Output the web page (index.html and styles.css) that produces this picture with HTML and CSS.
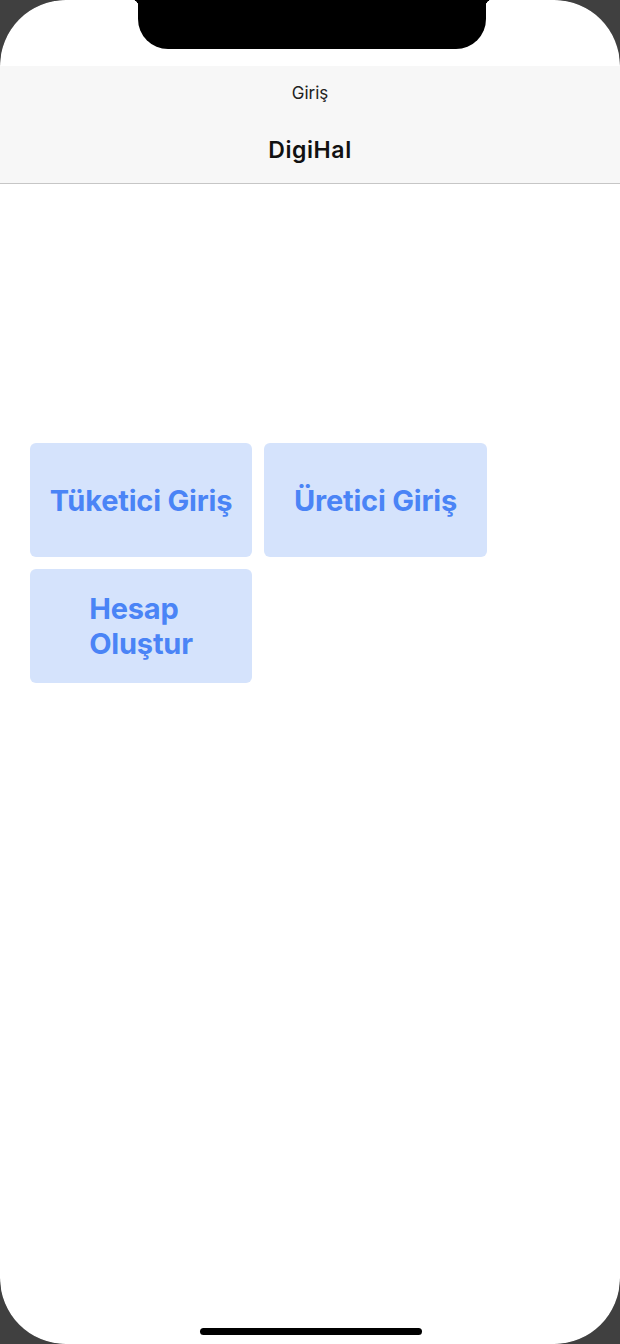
FILE: index.html
```html
<!DOCTYPE html>
<html lang="tr">
<head>
    <meta charset="UTF-8">
    <meta name="viewport" content="width=device-width, initial-scale=1.0">
    <title>DigiHal</title>
    <link rel="stylesheet" href="styles.css">
</head>
<body>

<div class="frame">
    <div class="screen">
        <div class="notch"></div>

        <div class="status"></div>

        <header class="nav">
            <div class="nav-back">Giriş</div>
            <h1 class="nav-title">DigiHal</h1>
        </header>

        <main class="content">
            <div class="menu">
                <button class="menu-btn">Tüketici Giriş</button>
                <button class="menu-btn">Üretici Giriş</button>
                <button class="menu-btn"><span class="wrap">Hesap<br>Oluştur</span></button>
            </div>
        </main>

        <div class="home-bar"></div>
    </div>
</div>

</body>
</html>
```

FILE: styles.css
```css
body {
    margin: 0;
    padding: 0;
    background-color: #404040;
    font-family: Inter, 'Noto Sans', sans-serif;
}

.frame {
    width: 620px;
    height: 1344px;
    background-color: #000;
    border-radius: 66px;
    overflow: hidden;
}

.screen {
    position: relative;
    width: 620px;
    height: 1344px;
    background-color: #ffffff;
    border-radius: 63px;
    overflow: hidden;
    display: flex;
    flex-direction: column;
}

.notch {
    position: absolute;
    top: 0;
    left: 138px;
    width: 348px;
    height: 49px;
    background-color: #000;
    border-radius: 0 0 30px 30px;
}

.notch::before,
.notch::after {
    content: '';
    position: absolute;
    top: 0;
    width: 6px;
    height: 6px;
    background: radial-gradient(circle at 0 100%, transparent 6px, #000 6.5px);
}

.notch::before {
    left: -6px;
}

.notch::after {
    right: -6px;
    transform: scaleX(-1);
}

.status {
    height: 66px;
    flex-shrink: 0;
}

.nav {
    height: 118px;
    background-color: #f7f7f7;
    border-bottom: 1px solid #c6c6c6;
    box-sizing: border-box;
    display: flex;
    flex-direction: column;
    align-items: center;
    flex-shrink: 0;
}

.nav-back {
    margin-top: 16px;
    font-size: 17px;
    color: #222;
    line-height: 22px;
}

.nav-title {
    margin: 0;
    margin-top: 33px;
    font-size: 23px;
    font-weight: 600;
    letter-spacing: 0.6px;
    color: #111;
    line-height: 26px;
}

.content {
    flex: 1;
    padding: 259px 30px 0 30px;
}

.menu {
    display: grid;
    grid-template-columns: 222px 223px;
    grid-auto-rows: 114px;
    gap: 12px;
}

.menu-btn {
    background-color: #d5e3fc;
    border: none;
    border-radius: 6px;
    color: #4a84f6;
    font-family: Inter, 'Noto Sans', sans-serif;
    font-size: 29px;
    font-weight: 700;
    letter-spacing: -0.2px;
    padding: 0;
    cursor: pointer;
}

.wrap {
    display: inline-block;
    text-align: left;
    line-height: 35px;
}

.home-bar {
    position: absolute;
    left: 200px;
    bottom: 9px;
    width: 222px;
    height: 7px;
    border-radius: 4px;
    background-color: #000;
}
```
